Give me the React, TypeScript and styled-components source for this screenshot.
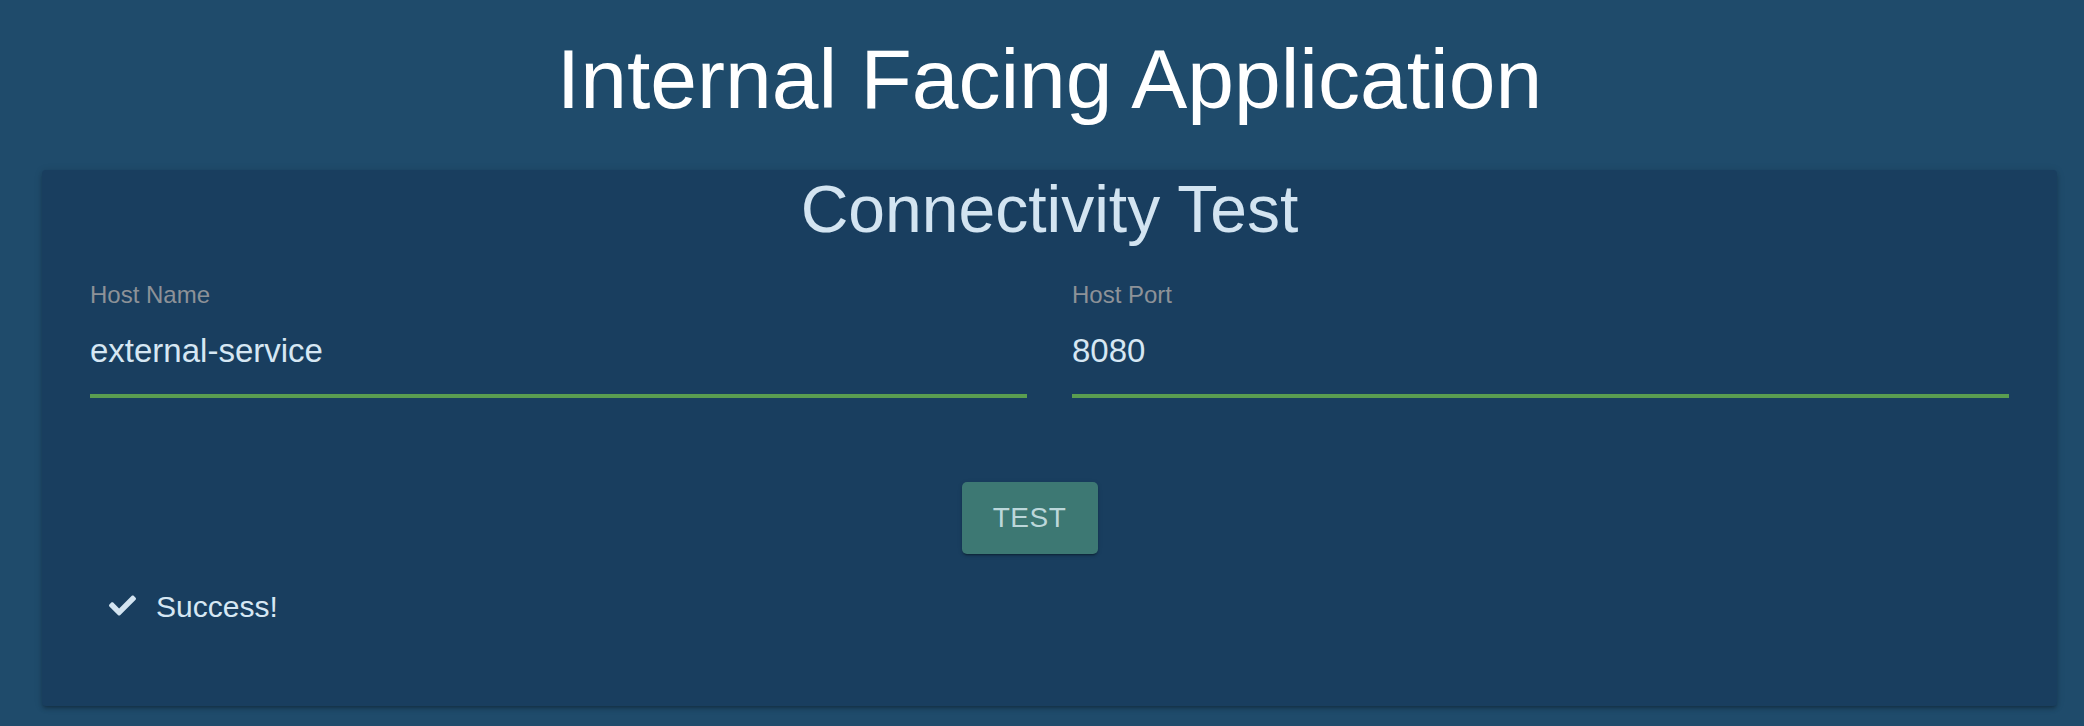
import React from "react";
import styled, { createGlobalStyle } from "styled-components";
import { FaCheck } from "react-icons/fa";

const GlobalStyle = createGlobalStyle`
  html, body {
    margin: 0;
    padding: 0;
    background: #1f4b6b;
  }
  body {
    font-family: "Liberation Sans", Arial, Helvetica, sans-serif;
    min-height: 100vh;
  }
`;

const Page = styled.div`
  padding: 31px 27px 20px 42px;
`;

const Title = styled.h1`
  margin: 0 0 42px 0;
  text-align: center;
  font-size: 84px;
  font-weight: 400;
  line-height: normal;
  color: #ffffff;
`;

const Card = styled.section`
  background: #193e5f;
  border-radius: 4px;
  padding: 0 48px 82px 48px;
  box-shadow: 0 3px 3px -2px rgba(0, 0, 0, 0.2), 0 3px 4px 0 rgba(0, 0, 0, 0.14),
    0 1px 8px 0 rgba(0, 0, 0, 0.12);
`;

const CardTitle = styled.h2`
  margin: 0;
  padding-top: 1px;
  text-align: center;
  font-size: 66px;
  font-weight: 400;
  line-height: normal;
  color: #d3e4f1;
`;

const Fields = styled.div`
  display: grid;
  grid-template-columns: 1fr 1fr;
  column-gap: 45px;
  margin-top: 34px;
`;

const Field = styled.label`
  display: flex;
  flex-direction: column;
`;

const FieldLabel = styled.span`
  font-size: 24px;
  line-height: normal;
  color: #8d9298;
`;

const FieldInput = styled.input`
  margin-top: 23px;
  padding: 0 0 25px 0;
  border: none;
  border-bottom: 4px solid #5a9d50;
  background: transparent;
  outline: none;
  font-family: "Liberation Sans", Arial, Helvetica, sans-serif;
  font-size: 33px;
  line-height: normal;
  height: 37px;
  box-sizing: content-box;
  color: #d6e7f3;
`;

const Actions = styled.div`
  display: flex;
  justify-content: center;
  padding-right: 40px;
  margin-top: 84px;
`;

const TestButton = styled.button`
  width: 136px;
  height: 72px;
  border: none;
  border-radius: 5px;
  background: #3d7873;
  color: #bcd7da;
  font-family: "Liberation Sans", Arial, Helvetica, sans-serif;
  font-size: 28px;
  letter-spacing: 0.5px;
  text-transform: uppercase;
  cursor: pointer;
  box-shadow: 0 3px 1px -2px rgba(0, 0, 0, 0.2), 0 2px 2px 0 rgba(0, 0, 0, 0.14),
    0 1px 5px 0 rgba(0, 0, 0, 0.12);
`;

const Status = styled.div`
  display: flex;
  align-items: center;
  gap: 20px;
  margin-top: 36px;
  padding-left: 19px;
  font-size: 30px;
  line-height: normal;
  color: #d6e7f3;
`;

const CheckIcon = styled(FaCheck)`
  width: 27px;
  height: 27px;
  color: #d3e4f1;
  margin-top: -3px;
`;

export default function App() {
  return (
    <>
      <GlobalStyle />
      <Page>
        <Title>Internal Facing Application</Title>
        <Card>
          <CardTitle>Connectivity Test</CardTitle>
          <Fields>
            <Field>
              <FieldLabel>Host Name</FieldLabel>
              <FieldInput defaultValue="external-service" />
            </Field>
            <Field>
              <FieldLabel>Host Port</FieldLabel>
              <FieldInput defaultValue="8080" />
            </Field>
          </Fields>
          <Actions>
            <TestButton>Test</TestButton>
          </Actions>
          <Status>
            <CheckIcon />
            <span>Success!</span>
          </Status>
        </Card>
      </Page>
    </>
  );
}
